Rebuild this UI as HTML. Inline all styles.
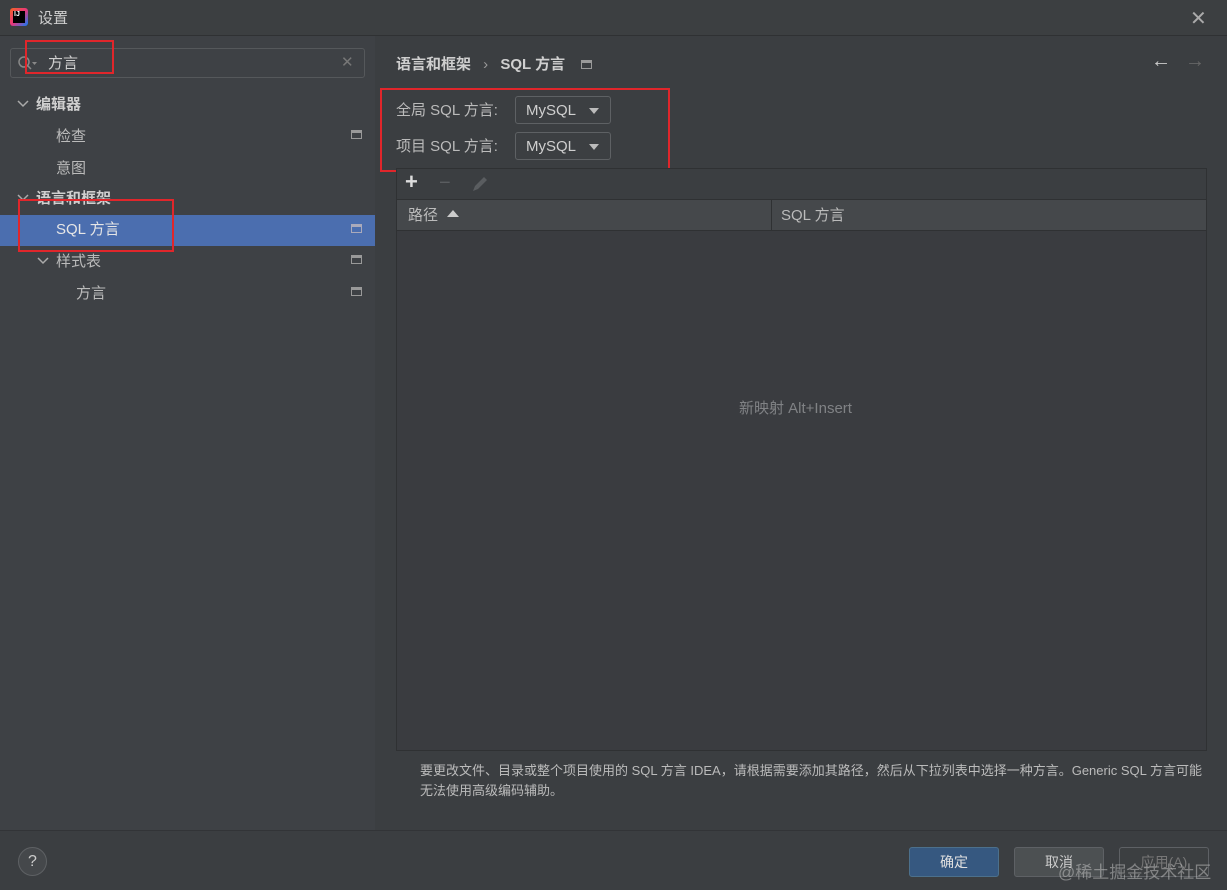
<!DOCTYPE html>
<html><head><meta charset="utf-8"><style>
*{margin:0;padding:0;box-sizing:border-box}
body{width:1227px;height:890px;background:#3b3e41;font-family:"Liberation Sans","Noto Sans CJK SC",sans-serif;color:#bbbbbb;font-size:14px;position:relative;overflow:hidden}
.abs{position:absolute}
.title{left:0;top:0;width:1227px;height:36px;background:#3c3f41;border-bottom:1px solid #2f3133}
.left{left:0;top:36px;width:375px;height:794px;background:#3e4145}
.right{left:375px;top:36px;width:852px;height:794px;background:#3b3e41}
.bottom{left:0;top:830px;width:1227px;height:60px;background:#3b3e41;border-top:1px solid #323437}
.red{border:2px solid #e0262b}
.pi{width:11px;height:9px;border:1px solid #999;border-top-width:3px}
.btn{height:30px;border-radius:3px;text-align:center;line-height:28px;font-size:14px}
.combo{width:96px;height:28px;border:1px solid #5e6164;border-radius:3px;background:#3c3f42;color:#cfcfcf;font-size:15px;padding-left:10px;line-height:28px}
.combo:after{content:"";position:absolute;right:11px;top:11px;border-left:5px solid transparent;border-right:5px solid transparent;border-top:6px solid #bbb}
</style></head><body>
<div class="abs title"></div>
<div class="abs" style="left:10px;top:8px;width:18px;height:18px;background:linear-gradient(135deg,#f26522,#e9367b,#087cfa);border-radius:3px"></div>
<div class="abs" style="left:13px;top:11px;width:12px;height:12px;background:#000;color:#fff;font-size:7px;font-weight:bold;line-height:8px;padding-left:1px">IJ</div>
<div class="abs" style="left:38px;top:7px;font-size:15px;color:#cfcfcf">设置</div>
<div class="abs" style="left:1190px;top:6px;font-size:20px;color:#aaa">✕</div>
<div class="abs left"></div>
<div class="abs right"></div>
<div class="abs bottom"></div>
<div class="abs" style="left:10px;top:48px;width:355px;height:30px;border:1px solid #55585b;border-radius:3px;background:#3e4145"></div>
<svg class="abs" style="left:17px;top:55px" width="22" height="16"><circle cx="7" cy="7" r="5" fill="none" stroke="#888" stroke-width="1.5"/><line x1="10.5" y1="10.5" x2="14" y2="14" stroke="#888" stroke-width="1.5"/><path d="M15 7h5l-2.5 3z" fill="#888"/></svg>
<div class="abs" style="left:48px;top:52px;font-size:15px;color:#d0d0d0">方言</div>
<div class="abs" style="left:341px;top:53px;font-size:15px;color:#777">✕</div>
<div class="abs red" style="left:25px;top:40px;width:89px;height:34px"></div>
<svg class="abs" style="left:17px;top:99px" width="12" height="10"><path d="M1 2l5 5 5-5" fill="none" stroke="#aaa" stroke-width="1.5"/></svg>
<div class="abs" style="left:36px;top:93px;font-size:15px;font-weight:bold;color:#cfcfcf">编辑器</div>
<div class="abs" style="left:56px;top:125px;font-size:15px">检查</div>
<div class="abs pi" style="left:351px;top:130px"></div>
<div class="abs" style="left:56px;top:157px;font-size:15px">意图</div>
<svg class="abs" style="left:17px;top:193px" width="12" height="10"><path d="M1 2l5 5 5-5" fill="none" stroke="#aaa" stroke-width="1.5"/></svg>
<div class="abs" style="left:36px;top:187px;font-size:15px;font-weight:bold;color:#cfcfcf">语言和框架</div>
<div class="abs" style="left:0;top:215px;width:375px;height:31px;background:#4b6eaf"></div>
<div class="abs" style="left:56px;top:218px;font-size:15px;color:#e6e6e6">SQL 方言</div>
<div class="abs pi" style="left:351px;top:224px;border-color:#aab"></div>
<div class="abs red" style="left:18px;top:199px;width:156px;height:53px"></div>
<svg class="abs" style="left:37px;top:256px" width="12" height="10"><path d="M1 2l5 5 5-5" fill="none" stroke="#aaa" stroke-width="1.5"/></svg>
<div class="abs" style="left:56px;top:250px;font-size:15px">样式表</div>
<div class="abs pi" style="left:351px;top:255px"></div>
<div class="abs" style="left:76px;top:282px;font-size:15px">方言</div>
<div class="abs pi" style="left:351px;top:287px"></div>
<div class="abs" style="left:396px;top:53px;font-size:15px;font-weight:bold;color:#cfcfcf">语言和框架 <span style="font-weight:normal;color:#999;margin:0 8px">›</span> SQL 方言</div>
<div class="abs pi" style="left:581px;top:60px"></div>
<div class="abs" style="left:1151px;top:50px;font-size:20px;color:#ccc">←</div>
<div class="abs" style="left:1185px;top:50px;font-size:20px;color:#666">→</div>
<div class="abs" style="left:396px;top:99px;font-size:15px">全局 SQL 方言:</div>
<div class="abs combo" style="left:515px;top:96px">MySQL</div>
<div class="abs" style="left:396px;top:135px;font-size:15px">项目 SQL 方言:</div>
<div class="abs combo" style="left:515px;top:132px">MySQL</div>
<div class="abs red" style="left:380px;top:88px;width:290px;height:84px"></div>
<div class="abs" style="left:396px;top:168px;width:811px;height:583px;border:1px solid #2f3133;background:#3a3c40"></div>
<div class="abs" style="left:397px;top:169px;width:809px;height:31px;background:#3b3e41;border-bottom:1px solid #2f3133"></div>
<div class="abs" style="left:405px;top:169px;font-size:22px;color:#ddd;font-weight:bold">+</div>
<div class="abs" style="left:439px;top:172px;font-size:20px;color:#5a5d60">−</div>
<svg class="abs" style="left:471px;top:175px" width="18" height="18"><path d="M2 16l2-5 9-9 3 3-9 9z" fill="#5a5d60"/></svg>
<div class="abs" style="left:397px;top:200px;width:809px;height:31px;background:#45484b;border-bottom:1px solid #2f3133"></div>
<div class="abs" style="left:771px;top:200px;width:1px;height:31px;background:#2f3133"></div>
<div class="abs" style="left:408px;top:204px;font-size:15px">路径</div>
<div class="abs" style="left:447px;top:210px;border-left:6px solid transparent;border-right:6px solid transparent;border-bottom:7px solid #ccc"></div>
<div class="abs" style="left:781px;top:204px;font-size:15px">SQL 方言</div>
<div class="abs" style="left:739px;top:397px;font-size:15px;color:#808285">新映射 Alt+Insert</div>
<div class="abs" style="left:420px;top:761px;font-size:13px;line-height:20px;width:800px">要更改文件、目录或整个项目使用的 SQL 方言 IDEA，请根据需要添加其路径，然后从下拉列表中选择一种方言。Generic SQL 方言可能<br>无法使用高级编码辅助。</div>
<div class="abs" style="left:18px;top:847px;width:29px;height:29px;border-radius:50%;border:1px solid #5e6164;background:#45484b;color:#ccc;text-align:center;line-height:27px;font-size:16px">?</div>
<div class="abs btn" style="left:909px;top:847px;width:90px;background:#365880;border:1px solid #4c708c;color:#e0e0e0">确定</div>
<div class="abs btn" style="left:1014px;top:847px;width:90px;background:#4c5052;border:1px solid #5e6165;color:#ccc">取消</div>
<div class="abs btn" style="left:1119px;top:847px;width:90px;background:#3c3f41;border:1px solid #5e6165;color:#777">应用(A)</div>
<div class="abs" style="left:1058px;top:858px;font-size:17px;color:rgba(200,200,200,0.5)">@稀土掘金技术社区</div>
</body></html>
